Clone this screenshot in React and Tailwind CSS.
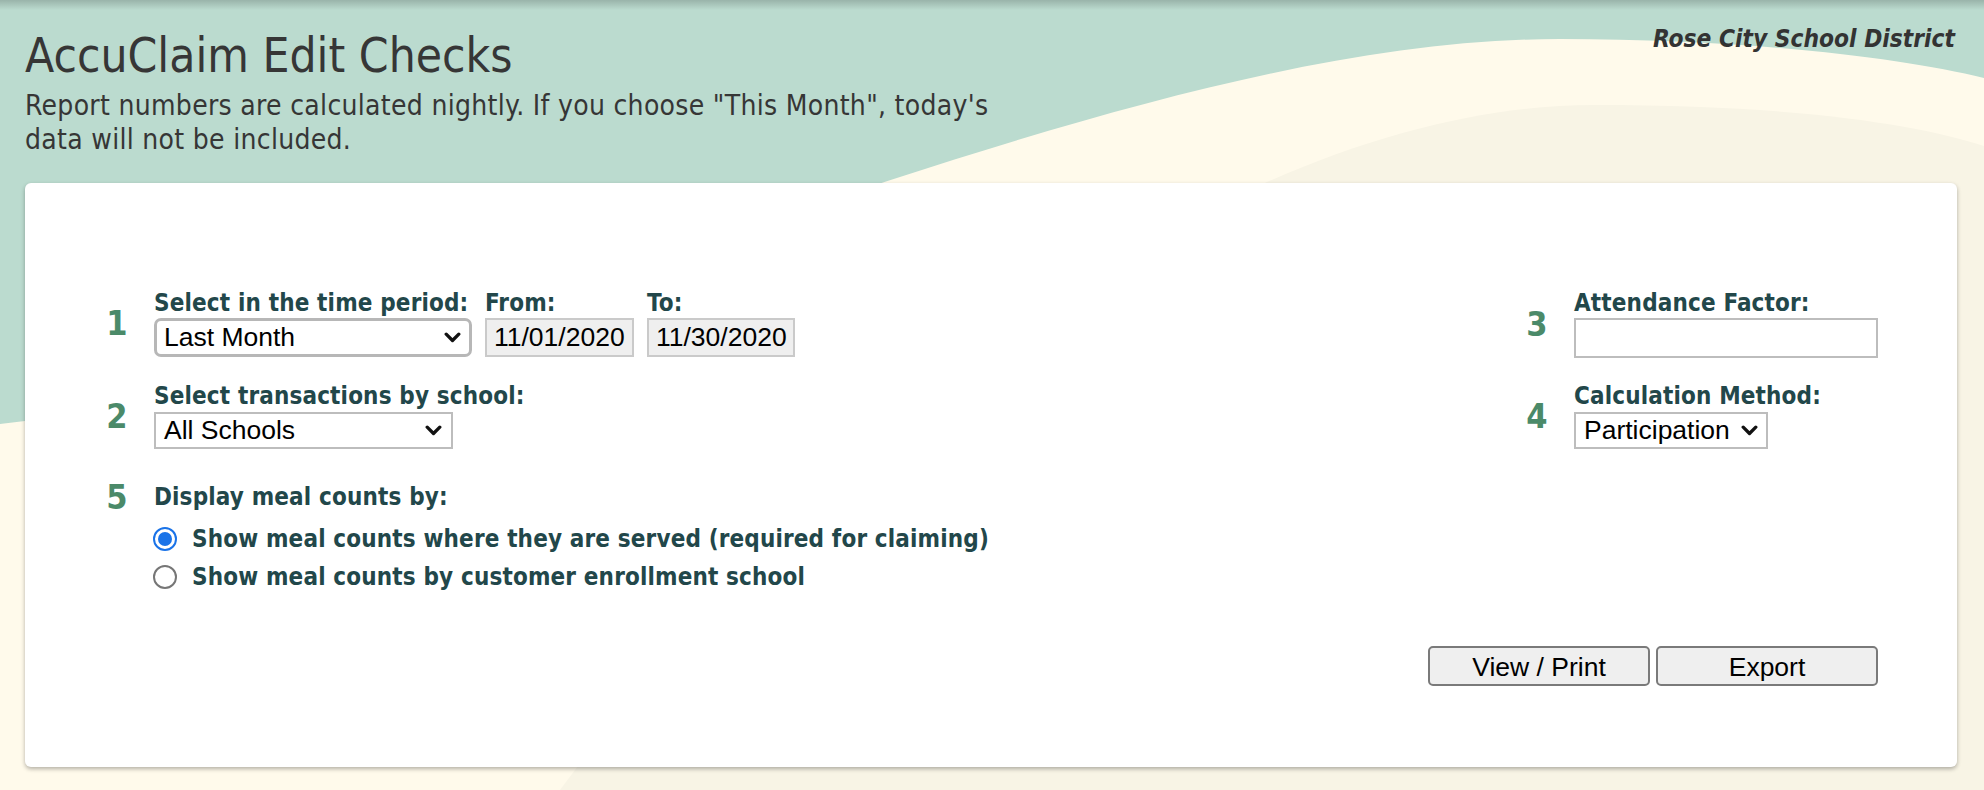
import React from "react";

const SANS = "font-['DejaVu_Sans_Condensed','DejaVu_Sans',sans-serif] font-stretch-condensed";
const CTRL = "font-['Liberation_Sans',Arial,sans-serif] text-[26.5px] text-black";

function Chevron() {
  return (
    <svg width="17" height="11" viewBox="0 0 17 11" className="shrink-0">
      <path d="M2.2 2.2 L8.5 8.5 L14.8 2.2" stroke="#111" strokeWidth="3.3" fill="none" strokeLinecap="round" strokeLinejoin="round" />
    </svg>
  );
}

function Num({ n }) {
  return (
    <div className={`w-[34px] shrink-0 text-center text-[34px] leading-[40px] font-bold text-[#4b8a69] ${SANS}`}>{n}</div>
  );
}

function Label({ children }) {
  return <div className={`text-[24px] leading-[28px] font-bold tracking-[0.15px] text-[#22474a] whitespace-nowrap ${SANS}`}>{children}</div>;
}

function Radio({ checked }) {
  return checked ? (
    <span className="w-[24px] h-[24px] rounded-full border-[2px] border-[#1a73e8] flex items-center justify-center shrink-0 bg-white">
      <span className="w-[14px] h-[14px] rounded-full bg-[#1a73e8]" />
    </span>
  ) : (
    <span className="w-[24px] h-[24px] rounded-full border-[2px] border-[#767676] shrink-0 bg-white" />
  );
}

export default function App() {
  return (
    <div className="relative w-[1984px] h-[790px] overflow-hidden bg-[#bbdbcf]">
      <svg className="absolute inset-0" width="1984" height="790" viewBox="0 0 1984 790">
        <path d="M0,424 C500,370 1100,39 1560,39 C1750,39 1900,58 1984,78 L1984,790 L0,790 Z" fill="#fffaeb" />
        <path d="M560,790 C900,330 1300,105 1594,105 C1800,105 1920,125 1984,146 L1984,790 Z" fill="#f8f4e5" />
      </svg>
      <div className="absolute top-0 left-0 right-0 h-[10px] bg-linear-to-b from-[rgba(0,0,0,0.18)] to-transparent" />

      <div className="relative flex flex-col">
        <div className="flex justify-between">
          <div className="pl-[25px] pt-[28px]">
            <h1 className={`text-[47.5px] leading-[56px] font-normal text-[#363636] ${SANS}`}>AccuClaim Edit Checks</h1>
            <p className={`mt-[5px] text-[28px] leading-[34px] tracking-[0.3px] text-[#363636] ${SANS}`}>
              Report numbers are calculated nightly. If you choose "This Month", today's
              <br />
              data will not be included.
            </p>
          </div>
          <div className={`pt-[25px] pr-[29px] text-[24.3px] leading-[28px] font-bold italic text-[#333] ${SANS}`}>Rose City School District</div>
        </div>

        <div className="mt-[26px] ml-[25px] mr-[27px] h-[584px] bg-white rounded-[6px] shadow-[0_2px_4px_rgba(0,0,0,0.3)] pt-[106px] pl-[75px] pr-[79px] flex flex-col">
          <div className="flex justify-between">
            {/* Left column */}
            <div className="flex flex-col">
              <div className="flex items-center gap-[20px]">
                <Num n="1" />
                <div className="flex gap-[13px]">
                  <div className="flex flex-col gap-[1px]">
                    <Label>Select in the time period:</Label>
                    <div className={`w-[318px] h-[39px] border-[3px] border-[#b7b7b7] rounded-[7px] pl-[7px] pr-[8px] flex items-center justify-between bg-white ${CTRL}`}>
                      <span>Last Month</span>
                      <Chevron />
                    </div>
                  </div>
                  <div className="flex flex-col gap-[1px]">
                    <Label>From:</Label>
                    <div className={`w-[149px] h-[39px] border-2 border-[#cacaca] bg-[#efefef] pl-[7px] flex items-center ${CTRL}`}>11/01/2020</div>
                  </div>
                  <div className="flex flex-col gap-[1px]">
                    <Label>To:</Label>
                    <div className={`w-[148px] h-[39px] border-2 border-[#cacaca] bg-[#efefef] pl-[7px] flex items-center ${CTRL}`}>11/30/2020</div>
                  </div>
                </div>
              </div>

              <div className="mt-[25px] flex items-center gap-[20px]">
                <Num n="2" />
                <div className="flex flex-col gap-[2px]">
                  <Label>Select transactions by school:</Label>
                  <div className={`w-[299px] h-[37px] border-2 border-[#bdbdbd] pl-[8px] pr-[9px] flex items-center justify-between bg-white ${CTRL}`}>
                    <span>All Schools</span>
                    <Chevron />
                  </div>
                </div>
              </div>

              <div className="mt-[28px] flex flex-col">
                <div className="flex items-center gap-[20px]">
                  <Num n="5" />
                  <Label>Display meal counts by:</Label>
                </div>
                <div className="mt-[3px] pl-[53px] flex flex-col">
                  <div className="h-[38px] flex items-center gap-[15px]">
                    <Radio checked />
                    <Label>Show meal counts where they are served (required for claiming)</Label>
                  </div>
                  <div className="h-[38px] flex items-center gap-[15px]">
                    <Radio />
                    <Label>Show meal counts by customer enrollment school</Label>
                  </div>
                </div>
              </div>
            </div>

            {/* Right column */}
            <div className="flex flex-col">
              <div className="flex items-center gap-[20px]">
                <Num n="3" />
                <div className="flex flex-col gap-[1px]">
                  <Label>Attendance Factor:</Label>
                  <div className="w-[304px] h-[40px] border-2 border-[#bdbdbd] bg-white" />
                </div>
              </div>
              <div className="mt-[24px] flex items-center gap-[20px]">
                <Num n="4" />
                <div className="flex flex-col gap-[2px]">
                  <Label>Calculation Method:</Label>
                  <div className={`w-[194px] h-[37px] border-2 border-[#bdbdbd] pl-[8px] pr-[8px] flex items-center justify-between bg-white ${CTRL}`}>
                    <span>Participation</span>
                    <Chevron />
                  </div>
                </div>
              </div>
            </div>
          </div>

          <div className="mt-[50px] flex justify-end gap-[6px]">
            <button className={`w-[222px] h-[40px] border-2 border-[#7a7a7a] rounded-[5px] bg-[#efefef] ${CTRL}`}>View / Print</button>
            <button className={`w-[222px] h-[40px] border-2 border-[#7a7a7a] rounded-[5px] bg-[#efefef] ${CTRL}`}>Export</button>
          </div>
        </div>
      </div>
    </div>
  );
}
